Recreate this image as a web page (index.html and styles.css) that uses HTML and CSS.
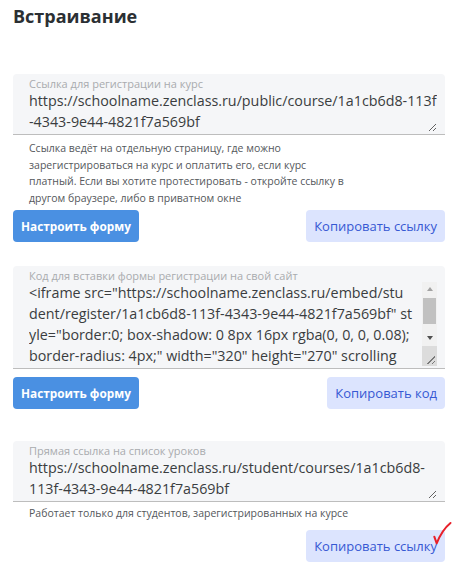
FILE: index.html
```html
<!DOCTYPE html>
<html lang="ru">
<head>
  <meta charset="UTF-8" />
  <title>Встраивание</title>
  <link rel="stylesheet" href="styles.css">
</head>
<body>
  <h2 class="title">Встраивание</h2>

  <div class="block first">
    <label class="field">
      <span class="field-label">Ссылка для регистрации на курс</span>
      <textarea class="field-input rows-2" readonly>https://schoolname.zenclass.ru/public/course/1a1cb6d8-113f
-4343-9e44-4821f7a569bf</textarea>
    </label>
    <p class="hint">Ссылка ведёт на отдельную страницу, где можно<br>зарегистрироваться на курс и оплатить его, если курс<br>платный. Если вы хотите протестировать - откройте ссылку в<br>другом браузере, либо в приватном окне</p>
    <div class="actions">
      <button class="btn btn-primary">Настроить форму</button>
      <button class="btn btn-light">Копировать ссылку</button>
    </div>
  </div>

  <div class="block second">
    <label class="field">
      <span class="field-label">Код для вставки формы регистрации на свой сайт</span>
      <div class="field-body">
        <textarea class="field-input rows-4" readonly>&lt;iframe src="https://schoolname.zenclass.ru/embed/stu
dent/register/1a1cb6d8-113f-4343-9e44-4821f7a569bf" st
yle="border:0; box-shadow: 0 8px 16px rgba(0, 0, 0, 0.08);
border-radius: 4px;" width="320" height="270" scrolling
="no"&gt;&lt;/iframe&gt;</textarea>
        <div class="scrollbar">
          <div class="sb-btn"><span class="arrow up"></span></div>
          <div class="sb-track"><div class="sb-thumb"></div></div>
          <div class="sb-btn"><span class="arrow down"></span></div>
          <div class="sb-corner"></div>
        </div>
      </div>
    </label>
    <div class="actions">
      <button class="btn btn-primary">Настроить форму</button>
      <button class="btn btn-light">Копировать код</button>
    </div>
  </div>

  <div class="block third">
    <label class="field">
      <span class="field-label">Прямая ссылка на список уроков</span>
      <textarea class="field-input rows-2" readonly>https://schoolname.zenclass.ru/student/courses/1a1cb6d8-
113f-4343-9e44-4821f7a569bf</textarea>
    </label>
    <p class="hint">Работает только для студентов, зарегистрированных на курсе</p>
    <div class="actions end">
      <button class="btn btn-light copied">
        Копировать ссылку
        <svg class="check" width="26" height="30" viewBox="0 0 26 30">
          <path d="M4.3 18.7 L6.7 25.3 Q12 12 20.5 5" fill="none" stroke="#e8202a" stroke-width="2" stroke-linecap="round" stroke-linejoin="round"/>
        </svg>
      </button>
    </div>
  </div>
</body>
</html>
```

FILE: styles.css
```css
*, *::before, *::after {
  box-sizing: border-box;
}

body {
  margin: 0;
  padding: 0 18px 0 13px;
  width: 463px;
  font-family: "Open Sans", "Noto Sans", sans-serif;
  color: #2b2f33;
  background: #fff;
}

.title {
  margin: 0;
  padding-top: 3px;
  font-size: 18px;
  font-weight: 700;
  line-height: 26px;
  color: #2b2f33;
  height: 74px;
}

.block.first {
  margin-bottom: 24px;
}

.block.second {
  margin-bottom: 32px;
}

.field {
  display: flex;
  flex-direction: column;
  background: #f5f6f8;
  border-radius: 4px 4px 0 0;
  border-bottom: 1px solid #bdbdbd;
  padding: 4px 8px 2px 16px;
}

.field-label {
  font-size: 11px;
  line-height: 12px;
  color: #a9abae;
}

.field-input {
  border: none;
  background: transparent;
  font-family: inherit;
  font-size: 14.3px;
  line-height: 21px;
  color: #3a3d40;
  padding: 0;
  margin: 0;
  resize: vertical;
  outline: none;
  width: 100%;
  white-space: pre;
  overflow: hidden;
}

.rows-2 {
  height: 42px;
}

.field-body {
  display: flex;
}

.rows-4 {
  height: 84px;
  resize: none;
  flex: 1;
}

/* drawn scrollbar, the headless browser hides the real one */
.scrollbar {
  width: 15px;
  margin-left: 1px;
  display: flex;
  flex-direction: column;
  background: #f1f1f1;
}

.sb-btn {
  height: 15px;
  display: flex;
  align-items: center;
  justify-content: center;
}

.sb-track {
  flex: 1;
  padding: 1px 1px 0;
}

.sb-thumb {
  height: 26px;
  background: #c1c1c1;
}

.arrow {
  width: 0;
  height: 0;
  border-left: 3.5px solid transparent;
  border-right: 3.5px solid transparent;
}

.arrow.up {
  border-bottom: 4px solid #a3a3a3;
}

.arrow.down {
  border-top: 4px solid #505050;
}

.sb-corner {
  height: 20px;
  background-color: #dcdcdc;
  background-image: linear-gradient(135deg, transparent 0 55%, #7a7a7a 55% 62%, transparent 62% 78%, #7a7a7a 78% 85%, transparent 85%);
  background-size: 9px 9px;
  background-position: right 2px bottom 2px;
  background-repeat: no-repeat;
}

.hint {
  margin: 5px 0 0;
  padding-left: 16px;
  font-size: 10.5px;
  line-height: 16.7px;
  color: #55585c;
}

.third .hint {
  margin-top: 3px;
}

.actions {
  display: flex;
  justify-content: space-between;
  margin-top: 8px;
}

.first .actions {
  margin-top: 3px;
}

.actions.end {
  justify-content: flex-end;
}

.btn {
  height: 32px;
  border: none;
  border-radius: 4px;
  padding: 0 8px;
  font-family: inherit;
  font-size: 13px;
  cursor: pointer;
}

.btn-primary {
  background: #4a90e2;
  color: #fff;
  font-size: 11.8px;
  font-weight: 700;
}

.btn-light {
  background: #dce4fe;
  color: #3658d3;
}

.copied {
  position: relative;
}

.check {
  position: absolute;
  right: -11px;
  top: -12px;
}
```
